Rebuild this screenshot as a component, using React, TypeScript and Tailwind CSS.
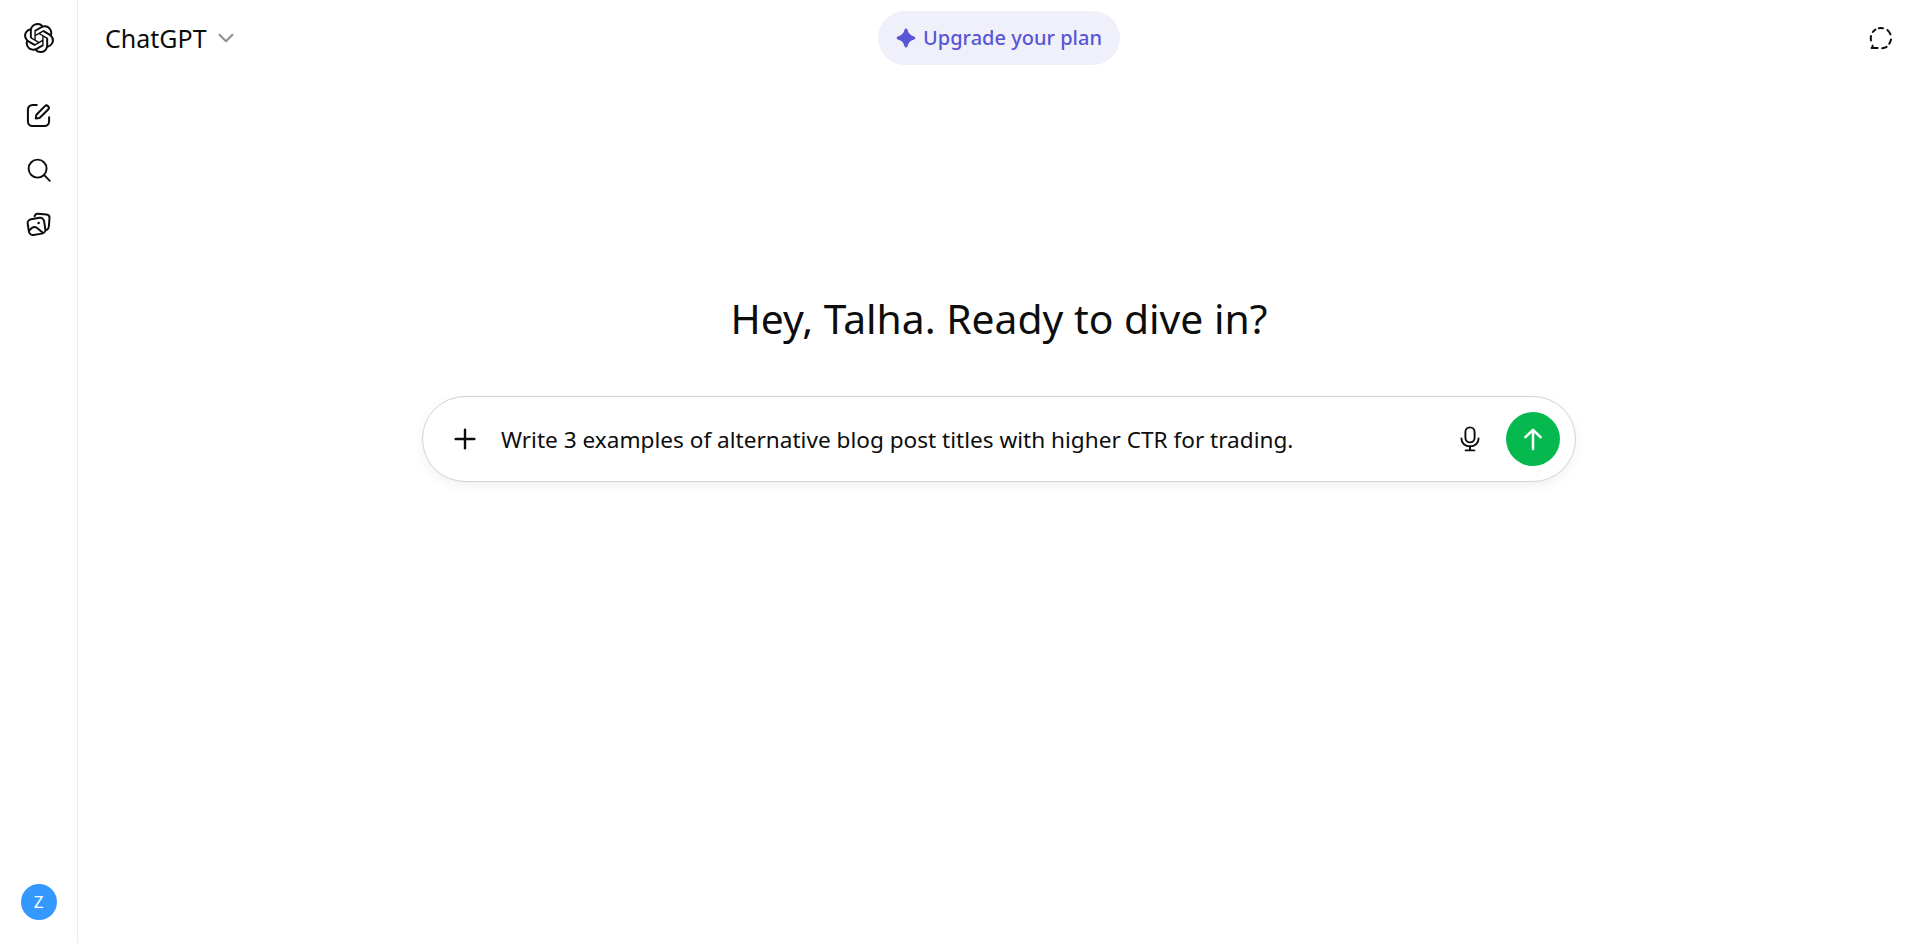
import { ChevronDown, Plus } from 'lucide-react';
import { SiOpenai } from 'react-icons/si';

function EditIcon() {
    return (
        <svg width="27" height="27" viewBox="0 0 24 24" fill="none" stroke="#0d0d0d" strokeWidth="1.8" strokeLinecap="round" strokeLinejoin="round">
            <path d="M10.5 2.6H6.6A4 4 0 0 0 2.6 6.6v10.8a4 4 0 0 0 4 4h10.8a4 4 0 0 0 4-4v-3.9" />
            <path d="M9.6 14.6l.5-3.2 7.6-7.7a2 2 0 0 1 2.8 0l.1.1a2 2 0 0 1 0 2.8l-7.7 7.6z" />
        </svg>
    );
}

function SearchIcon() {
    return (
        <svg width="26" height="26" viewBox="0 0 26 26" fill="none" stroke="#0d0d0d" strokeWidth="1.9" strokeLinecap="round">
            <circle cx="11.6" cy="11.6" r="9" />
            <path d="M18.2 18.2l5.6 5.6" />
        </svg>
    );
}

function ImagesIcon() {
    return (
        <svg width="26" height="26" viewBox="0 0 26 26" fill="none" stroke="#0d0d0d" strokeWidth="2" strokeLinecap="round" strokeLinejoin="round">
            <path d="M8.6 5.2l.6-1.2c.5-1 1.2-1.4 2.4-1.3l9 .8c2 .2 3 1.3 2.9 3.2l-.6 8.6c-.1 1.6-.7 2.8-2.1 3.6" />
            <rect x="2.2" y="7.4" width="16.6" height="16" rx="4" transform="rotate(-9 10.5 15.4)" />
            <circle cx="12.6" cy="12" r="1.3" fill="#0d0d0d" stroke="none" />
            <path d="M3.4 19.4c2.6-3.4 5-4.4 7.4-2.6l6 5" />
        </svg>
    );
}

function MicIcon() {
    return (
        <svg width="24" height="26" viewBox="0 0 24 26" fill="none" stroke="#0d0d0d" strokeWidth="1.9" strokeLinecap="round">
            <rect x="7.4" y="1.4" width="9.2" height="15" rx="4.6" />
            <path d="M3.4 12.4c0 5 3.8 8 8.6 8s8.6-3 8.6-8" />
            <path d="M12 20.4v3.6M7.6 24.4h8.8" />
        </svg>
    );
}

function SendArrow() {
    return (
        <svg width="20" height="24" viewBox="0 0 20 24" fill="none" stroke="#ffffff" strokeWidth="2.5" strokeLinecap="round" strokeLinejoin="round">
            <path d="M10 22V3" />
            <path d="M2.4 10.2L10 3l7.6 7.2" />
        </svg>
    );
}

function TemporaryChatIcon() {
    return (
        <svg width="26" height="26" viewBox="0 0 26 26" fill="none" stroke="#0d0d0d" strokeWidth="2" strokeLinecap="round" strokeLinejoin="round">
            <path d="M10.8 3.2a10 10 0 0 1 4.2 0" />
            <path d="M19.4 5a10 10 0 0 1 3 4.4" />
            <path d="M23 14.4a10 10 0 0 1-1.8 4.4" />
            <path d="M18.6 21.8a10 10 0 0 1-4.4 1.4" />
            <path d="M9.6 23H3.6c.9-.8 1.3-1.6 1-2.4" />
            <path d="M3 15.6a10 10 0 0 1 0-4.6" />
            <path d="M4.8 7a10 10 0 0 1 2.6-2.4" />
        </svg>
    );
}

function SparkIcon() {
    return (
        <svg width="20" height="20" viewBox="0 0 20 20" fill="#5856d6">
            <path d="M10 0.5c.7 0 1.2.4 1.5 1.2.9 3.6 2.9 5.7 6.6 6.7.8.2 1.2.8 1.2 1.6s-.4 1.3-1.2 1.6c-3.7 1-5.7 3-6.6 6.7-.3.8-.8 1.2-1.5 1.2s-1.2-.4-1.5-1.2c-.9-3.7-2.9-5.7-6.6-6.7C1.1 11.3.7 10.8.7 10s.4-1.4 1.2-1.6c3.7-1 5.7-3.1 6.6-6.7.3-.8.8-1.2 1.5-1.2z" />
        </svg>
    );
}

export default function App() {
    return (
        <div className="flex h-[943px] w-full bg-white font-['Noto_Sans','Open_Sans',sans-serif] text-[#0d0d0d]">
            {/* sidebar */}
            <aside className="flex w-[78px] shrink-0 flex-col items-center border-r border-[#ececec] pt-[23px] pb-[23px]">
                <SiOpenai size={30} color="#0d0d0d" />
                <div className="mt-[49px] flex flex-col items-center gap-[28px]">
                    <EditIcon />
                    <SearchIcon />
                    <ImagesIcon />
                </div>
                <div className="mt-auto flex h-9 w-9 items-center justify-center rounded-full bg-[#3399ff] text-[17px] text-white">Z</div>
            </aside>

            {/* main */}
            <main className="flex min-w-0 flex-1 flex-col">
                <header className="grid h-[76px] grid-cols-3 items-center pl-[27px] pr-[24px]">
                    <div className="flex items-center gap-[6px]">
                        <span className="text-[25px] leading-none">ChatGPT</span>
                        <ChevronDown size={26} color="#8f8f8f" strokeWidth={1.9} />
                    </div>
                    <div className="flex justify-center">
                        <button className="flex h-[54px] w-[242px] items-center justify-center gap-[7px] rounded-full bg-[#f0f0fb] pr-[1px] text-[20px] font-medium text-[#5856d6]">
                            <SparkIcon />
                            Upgrade your plan
                        </button>
                    </div>
                    <div className="flex justify-end">
                        <TemporaryChatIcon />
                    </div>
                </header>

                <section className="flex flex-col items-center pl-[2px] pt-[212px]">
                    <h1 className="text-[40.8px] font-normal leading-[60px]">Hey, Talha. Ready to dive in?</h1>
                    <div className="mt-[48px] flex h-[86px] w-[1154px] items-center rounded-full border border-[#d4d4d4] bg-white pl-[26px] pr-[15px] shadow-[0_4px_12px_rgba(0,0,0,0.06)]">
                        <Plus size={32} color="#0d0d0d" strokeWidth={1.8} />
                        <span className="ml-[20px] flex-1 pt-[2px] text-[22.6px]">Write 3 examples of alternative blog post titles with higher CTR for trading.</span>
                        <MicIcon />
                        <div className="ml-[24px] flex h-[54px] w-[54px] items-center justify-center rounded-full bg-[#06b94f]">
                            <SendArrow />
                        </div>
                    </div>
                </section>
            </main>
        </div>
    );
}
